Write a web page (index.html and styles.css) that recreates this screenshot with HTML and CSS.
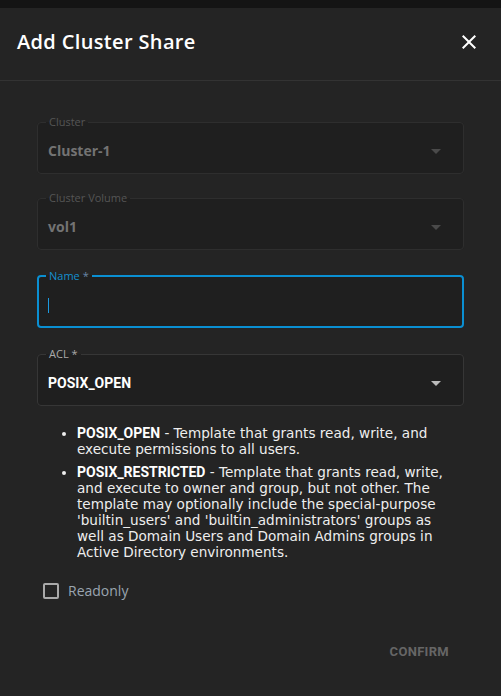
FILE: index.html
```html
<!DOCTYPE html>
<html>
<head>
<meta charset="utf-8">
<link rel="stylesheet" href="styles.css">
</head>
<body>
<div class="dialog">
  <header class="head">
    <h1 class="title">Add Cluster Share</h1>
    <button class="close" aria-label="Close">
      <svg viewBox="0 0 24 24" width="24" height="24"><path d="M19 6.41 17.59 5 12 10.59 6.41 5 5 6.41 10.59 12 5 17.59 6.41 19 12 13.41 17.59 19 19 17.59 13.41 12z" fill="#fff"/></svg>
    </button>
  </header>
  <div class="body">
    <fieldset class="field disabled f1">
      <legend>Cluster</legend>
      <div class="value">Cluster-1<span class="arrow"></span></div>
    </fieldset>
    <fieldset class="field disabled f2">
      <legend>Cluster Volume</legend>
      <div class="value">vol1<span class="arrow"></span></div>
    </fieldset>
    <fieldset class="field focused">
      <legend>Name <span class="ast">*</span></legend>
      <div class="value"><span class="caret"></span></div>
    </fieldset>
    <fieldset class="field select">
      <legend>ACL *</legend>
      <div class="value">POSIX_OPEN<span class="arrow"></span></div>
    </fieldset>
    <ul class="help">
      <li><b>POSIX_OPEN</b> - Template that grants read, write, and execute permissions to all users.</li>
      <li><b>POSIX_RESTRICTED</b> - Template that grants read, write, and execute to owner and group, but not other. The template may optionally include the special-purpose 'builtin_users' and 'builtin_administrators' groups as well as Domain Users and Domain Admins groups in Active Directory environments.</li>
    </ul>
    <label class="check"><span class="box"></span><span class="check-label">Readonly</span></label>
  </div>
  <div class="actions">
    <button class="confirm">CONFIRM</button>
  </div>
</div>
</body>
</html>
```

FILE: styles.css
```css
html, body {
  margin: 0;
  padding: 0;
  background: #141414;
  height: 100%;
}
body {
  padding-top: 8px;
  box-sizing: border-box;
  font-family: "Open Sans", "Liberation Sans", sans-serif;
  color: #eee;
}
.dialog {
  background: #242424;
  min-height: 688px;
  display: flex;
  flex-direction: column;
}
.head {
  border-bottom: 1px solid #333;
  display: flex;
  align-items: center;
  justify-content: space-between;
  padding: 0 20px 5px 17px;
  box-sizing: border-box;
  height: 73px;
}
.title {
  margin: 0;
  font-size: 20px;
  font-weight: 600;
  letter-spacing: 0.35px;
  color: #fff;
}
.close {
  background: none;
  border: 0;
  padding: 0;
  width: 24px;
  height: 24px;
  cursor: pointer;
}
.body {
  padding: 35px 37px 0;
  display: flex;
  flex-direction: column;
}
.field {
  margin: 0 0 20px;
  padding: 0 10px;
  border: 1px solid #2e2e2e;
  border-radius: 4px;
  background: #1f1f1f;
  min-width: 0;
}
.f1 { margin-bottom: 18px; }
.field legend {
  font-size: 11px;
  line-height: 12px;
  padding: 0 3px;
  margin-left: -2px;
  color: #555;
}
.field .value {
  position: relative;
  height: 45px;
  box-sizing: border-box;
  padding-top: 14px;
  line-height: 18px;
  font-size: 14px;
  font-weight: 700;
  color: #737373;
}
.arrow {
  position: absolute;
  right: 12px;
  top: 21px;
  width: 0;
  height: 0;
  border-left: 5px solid transparent;
  border-right: 5px solid transparent;
  border-top: 5px solid #4a4a4a;
}
.focused {
  border: 2px solid #0a8fd2;
  padding: 0 9px;
}
.focused legend {
  color: #1590cf;
  margin-left: -2px;
}
.focused .ast { color: #6a88a8; }
.focused .value { height: 44px; }
.caret {
  display: inline-block;
  width: 1px;
  height: 15px;
  margin-top: 2px;
  background: #1b9ae0;
  vertical-align: top;
}
.select {
  border-color: #363636;
  margin-bottom: 19px;
}
.select legend { color: #aaa; }
.select .value {
  color: #fff;
  font-family: Roboto, "Liberation Sans", sans-serif;
}
.select .arrow { border-top-color: #bbb; }
.help {
  margin: 0;
  padding: 0 12px 0 40px;
  font-family: "DejaVu Sans", "Open Sans", sans-serif;
  font-size: 13.6px;
  line-height: 16px;
  color: #eee;
}
.help li { margin-bottom: 7px; }
.help b {
  font-family: Roboto, "Liberation Sans", sans-serif;
  font-size: 14px;
  font-weight: 700;
  color: #fff;
}
.check {
  display: flex;
  align-items: center;
  margin: 14px 0 0 6px;
}
.box {
  width: 12px;
  height: 12px;
  border: 2px solid #a9a9a9;
  border-radius: 2px;
}
.check-label {
  margin-left: 9px;
  font-size: 14px;
  color: #9aa5b0;
}
.actions {
  display: flex;
  justify-content: flex-end;
  padding: 38px 44px 0 0;
}
.confirm {
  background: none;
  border: 0;
  padding: 6px 8px;
  font-family: Roboto, "Liberation Sans", sans-serif;
  font-weight: 700;
  font-size: 13px;
  letter-spacing: 0.3px;
  color: #666;
}
```
